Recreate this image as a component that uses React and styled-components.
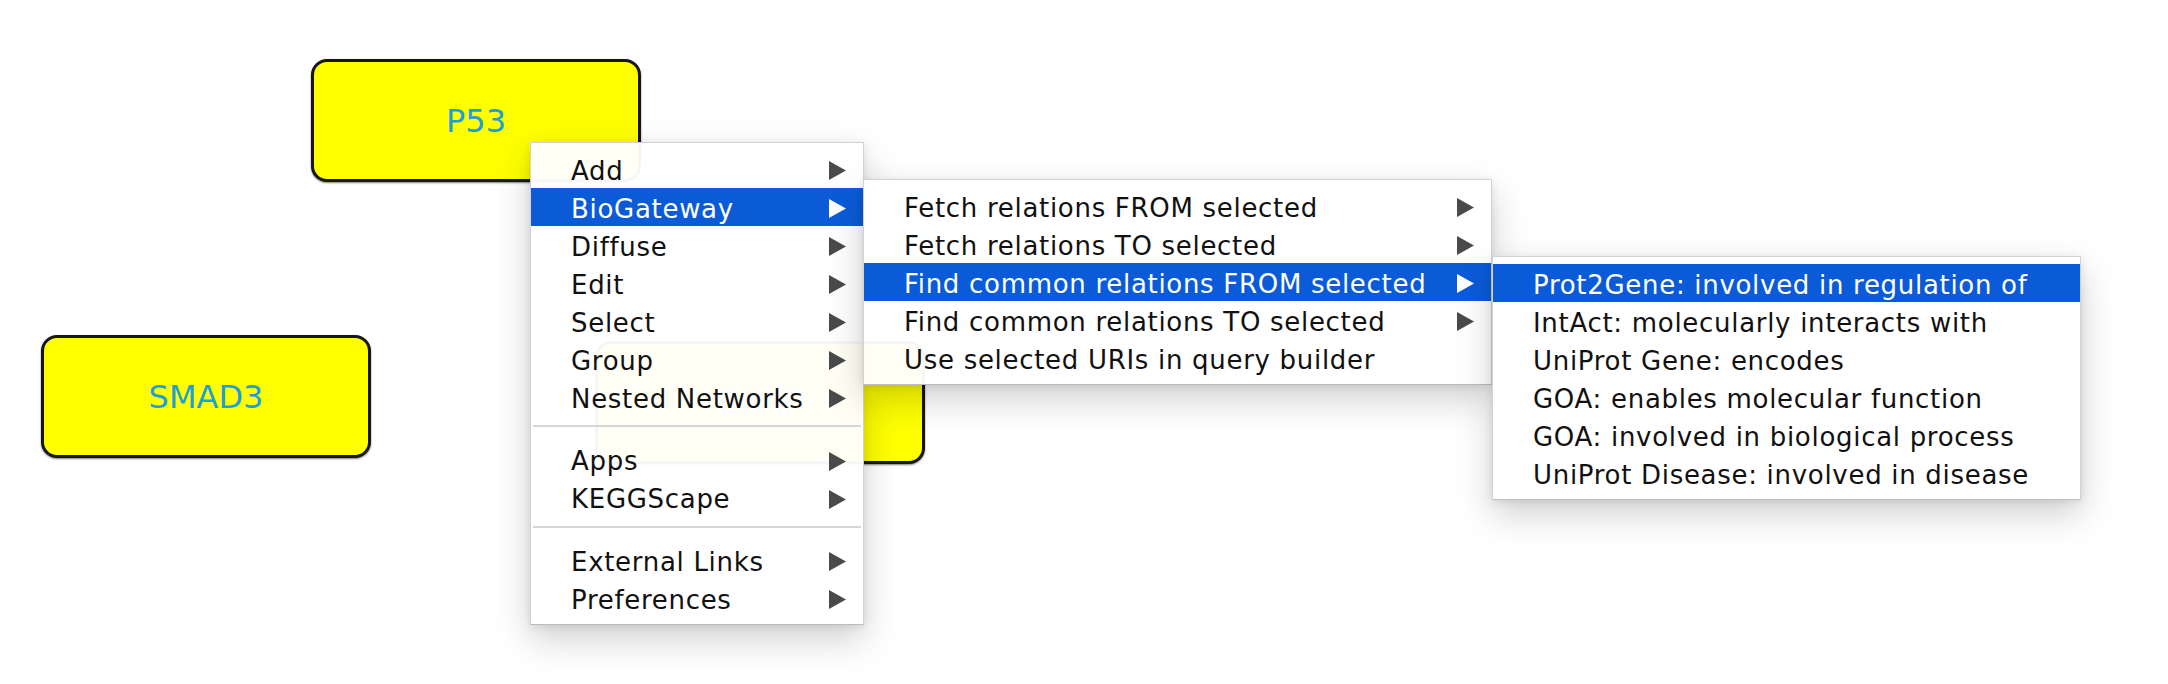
import React from 'react';
import styled, { createGlobalStyle } from 'styled-components';

const GlobalStyle = createGlobalStyle`
  html, body {
    margin: 0;
    padding: 0;
    background: #fff;
  }
  body {
    font-family: "DejaVu Sans", "Noto Sans", sans-serif;
  }
`;

const mainMenu = [
  { label: 'Add', sub: true },
  { label: 'BioGateway', sub: true, active: true },
  { label: 'Diffuse', sub: true },
  { label: 'Edit', sub: true },
  { label: 'Select', sub: true },
  { label: 'Group', sub: true },
  { label: 'Nested Networks', sub: true },
  { separator: true },
  { label: 'Apps', sub: true },
  { label: 'KEGGScape', sub: true },
  { separator: true },
  { label: 'External Links', sub: true },
  { label: 'Preferences', sub: true },
];

const bioGatewayMenu = [
  { label: 'Fetch relations FROM selected', sub: true },
  { label: 'Fetch relations TO selected', sub: true },
  { label: 'Find common relations FROM selected', sub: true, active: true },
  { label: 'Find common relations TO selected', sub: true },
  { label: 'Use selected URIs in query builder' },
];

const relationsMenu = [
  { label: 'Prot2Gene: involved in regulation of', active: true },
  { label: 'IntAct: molecularly interacts with' },
  { label: 'UniProt Gene: encodes' },
  { label: 'GOA: enables molecular function' },
  { label: 'GOA: involved in biological process' },
  { label: 'UniProt Disease: involved in disease' },
];

const nodes = [
  { id: 'p53', label: 'P53', x: 311, y: 59 },
  { id: 'smad3', label: 'SMAD3', x: 41, y: 335 },
  { id: 'braf', label: 'BRAF', x: 595, y: 341 },
];

function SubArrow({ active }) {
  return (
    <ArrowIcon viewBox="0 0 17 19" $active={active}>
      <polygon points="0,0 17,9.5 0,19" />
    </ArrowIcon>
  );
}

function PopupMenu({ items, x, y, width, layer }) {
  return (
    <Menu $x={x} $y={y} $w={width} $layer={layer}>
      {items.map((item, i) =>
        item.separator ? (
          <Separator key={`sep-${i}`} />
        ) : (
          <MenuItem key={item.label} $active={item.active}>
            <span>{item.label}</span>
            {item.sub && <SubArrow active={item.active} />}
          </MenuItem>
        )
      )}
    </Menu>
  );
}

export default function App() {
  return (
    <>
      <GlobalStyle />
      <Canvas>
        {nodes.map(n => (
          <Node key={n.id} $x={n.x} $y={n.y}>{n.label}</Node>
        ))}
        <PopupMenu items={mainMenu} x={530} y={142} width={334} layer={10} />
        <PopupMenu items={bioGatewayMenu} x={863} y={179} width={629} layer={11} />
        <PopupMenu items={relationsMenu} x={1492} y={256} width={589} layer={12} />
      </Canvas>
    </>
  );
}

// Styles
const Canvas = styled.div`
  position: relative;
  width: 2168px;
  height: 684px;
  overflow: hidden;
  background: #fff;
`;

const Node = styled.div`
  position: absolute;
  left: ${p => p.$x}px;
  top: ${p => p.$y}px;
  width: 330px;
  height: 123px;
  box-sizing: border-box;
  display: flex;
  align-items: center;
  justify-content: center;
  background: #ffff00;
  border: 3px solid #161616;
  border-radius: 16px;
  box-shadow: 0 1px 2px rgba(0, 0, 0, 0.5);
  color: #1ea0d6;
  font-family: "DejaVu Sans", sans-serif;
  font-size: 32px;
`;

const Menu = styled.div`
  position: absolute;
  left: ${p => p.$x}px;
  top: ${p => p.$y}px;
  width: ${p => p.$w}px;
  z-index: ${p => p.$layer};
  box-sizing: border-box;
  display: flex;
  flex-direction: column;
  padding: 7px 0;
  background: rgba(255, 255, 255, 0.965);
  border: 1px solid #d2d2d2;
  border-bottom-color: #bdbdbd;
  box-shadow: 0 14px 34px rgba(0, 0, 0, 0.19), 0 2px 8px rgba(0, 0, 0, 0.09);
`;

const MenuItem = styled.div`
  height: 38px;
  box-sizing: border-box;
  display: flex;
  align-items: center;
  justify-content: space-between;
  padding: 3px 17px 0 40px;
  font-family: "DejaVu Sans", sans-serif;
  font-size: 26px;
  letter-spacing: 0.7px;
  color: ${p => (p.$active ? '#fff' : '#111')};
  background: ${p => (p.$active ? '#0b5bd9' : 'transparent')};
  white-space: nowrap;
`;

const ArrowIcon = styled.svg`
  width: 17px;
  height: 19px;
  flex: none;
  fill: ${p => (p.$active ? '#fff' : '#4a4a4a')};
`;

const Separator = styled.div`
  height: 24.5px;
  box-sizing: border-box;
  padding-top: 9px;

  &::before {
    content: '';
    display: block;
    height: 2px;
    margin: 0 2px;
    background: #d6d6d6;
  }
`;
